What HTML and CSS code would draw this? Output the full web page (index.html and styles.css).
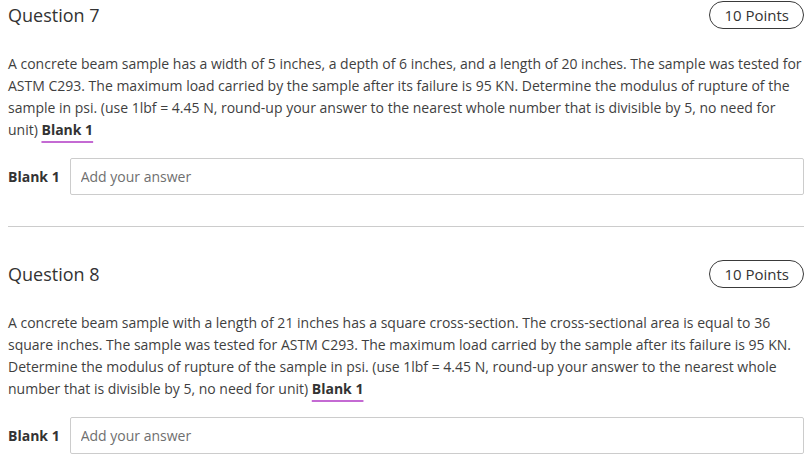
FILE: index.html
```html
<!DOCTYPE html>
<html>
<head>
<meta charset="utf-8">
<link rel="stylesheet" href="styles.css">
</head>
<body>
<div class="page">
  <section class="question">
    <div class="q-head">
      <h2 class="q-title">Question 7</h2>
      <span class="points">10 Points</span>
    </div>
    <p class="q-text">A concrete beam sample has a width of 5 inches, a depth of 6 inches, and a length of 20 inches. The sample was tested for ASTM C293. The maximum load carried by the sample after its failure is 95 KN. Determine the modulus of rupture of the sample in psi. (use 1lbf = 4.45 N, round-up your answer to the nearest whole number that is divisible by 5, no need for unit) <span class="blank-ref">Blank 1</span></p>
    <div class="answer-row">
      <label class="answer-label">Blank 1</label>
      <input class="answer-input" type="text" placeholder="Add your answer">
    </div>
  </section>
  <hr class="divider">
  <section class="question">
    <div class="q-head">
      <h2 class="q-title">Question 8</h2>
      <span class="points">10 Points</span>
    </div>
    <p class="q-text">A concrete beam sample with a length of 21 inches has a square cross-section. The cross-sectional area is equal to 36 square inches. The sample was tested for ASTM C293. The maximum load carried by the sample after its failure is 95 KN. Determine the modulus of rupture of the sample in psi. (use 1lbf = 4.45 N, round-up your answer to the nearest whole number that is divisible by 5, no need for unit) <span class="blank-ref">Blank 1</span></p>
    <div class="answer-row">
      <label class="answer-label">Blank 1</label>
      <input class="answer-input" type="text" placeholder="Add your answer">
    </div>
  </section>
</div>
</body>
</html>
```

FILE: styles.css
```css
html, body {
  margin: 0;
  padding: 0;
  background: #ffffff;
}

body {
  font-family: "Open Sans", "Liberation Sans", sans-serif;
  color: #333333;
}

.page {
  padding: 0 6px 0 8px;
}

.q-head {
  display: flex;
  align-items: center;
  justify-content: space-between;
  height: 29px;
}

.q-title {
  margin: 0;
  font-size: 18px;
  font-weight: 400;
  line-height: 28px;
  color: #333333;
}

.points {
  display: inline-flex;
  align-items: center;
  box-sizing: border-box;
  height: 28px;
  padding: 0 14px 0 14px;
  border: 1px solid #3a3a3a;
  border-radius: 14px;
  font-size: 15px;
  font-weight: 500;
  color: #333333;
}

.q-text {
  margin: 24px 0 0 0;
  font-size: 14px;
  line-height: 22px;
  color: #3f3f3f;
}

.blank-ref {
  display: inline-block;
  font-weight: 700;
  color: #333333;
  text-decoration: underline;
  text-decoration-color: #c46ad3;
  text-decoration-thickness: 2px;
  text-underline-offset: 6px;
}

.answer-row {
  display: flex;
  align-items: center;
  gap: 10px;
  margin-top: 17px;
}

.answer-label {
  font-size: 14px;
  font-weight: 700;
  color: #333333;
}

.answer-input {
  flex: 1;
  box-sizing: border-box;
  height: 37px;
  margin: 0;
  padding: 0 10px;
  border: 1px solid #cccccc;
  border-radius: 2px;
  font-family: "Open Sans", "Liberation Sans", sans-serif;
  font-size: 14px;
  color: #333333;
  background: #ffffff;
  outline: none;
}

.answer-input::placeholder {
  color: #6f6f6f;
}

.divider {
  margin: 31px 0 32px 0;
  border: 0;
  border-top: 1px solid #cccccc;
  height: 0;
}
```
